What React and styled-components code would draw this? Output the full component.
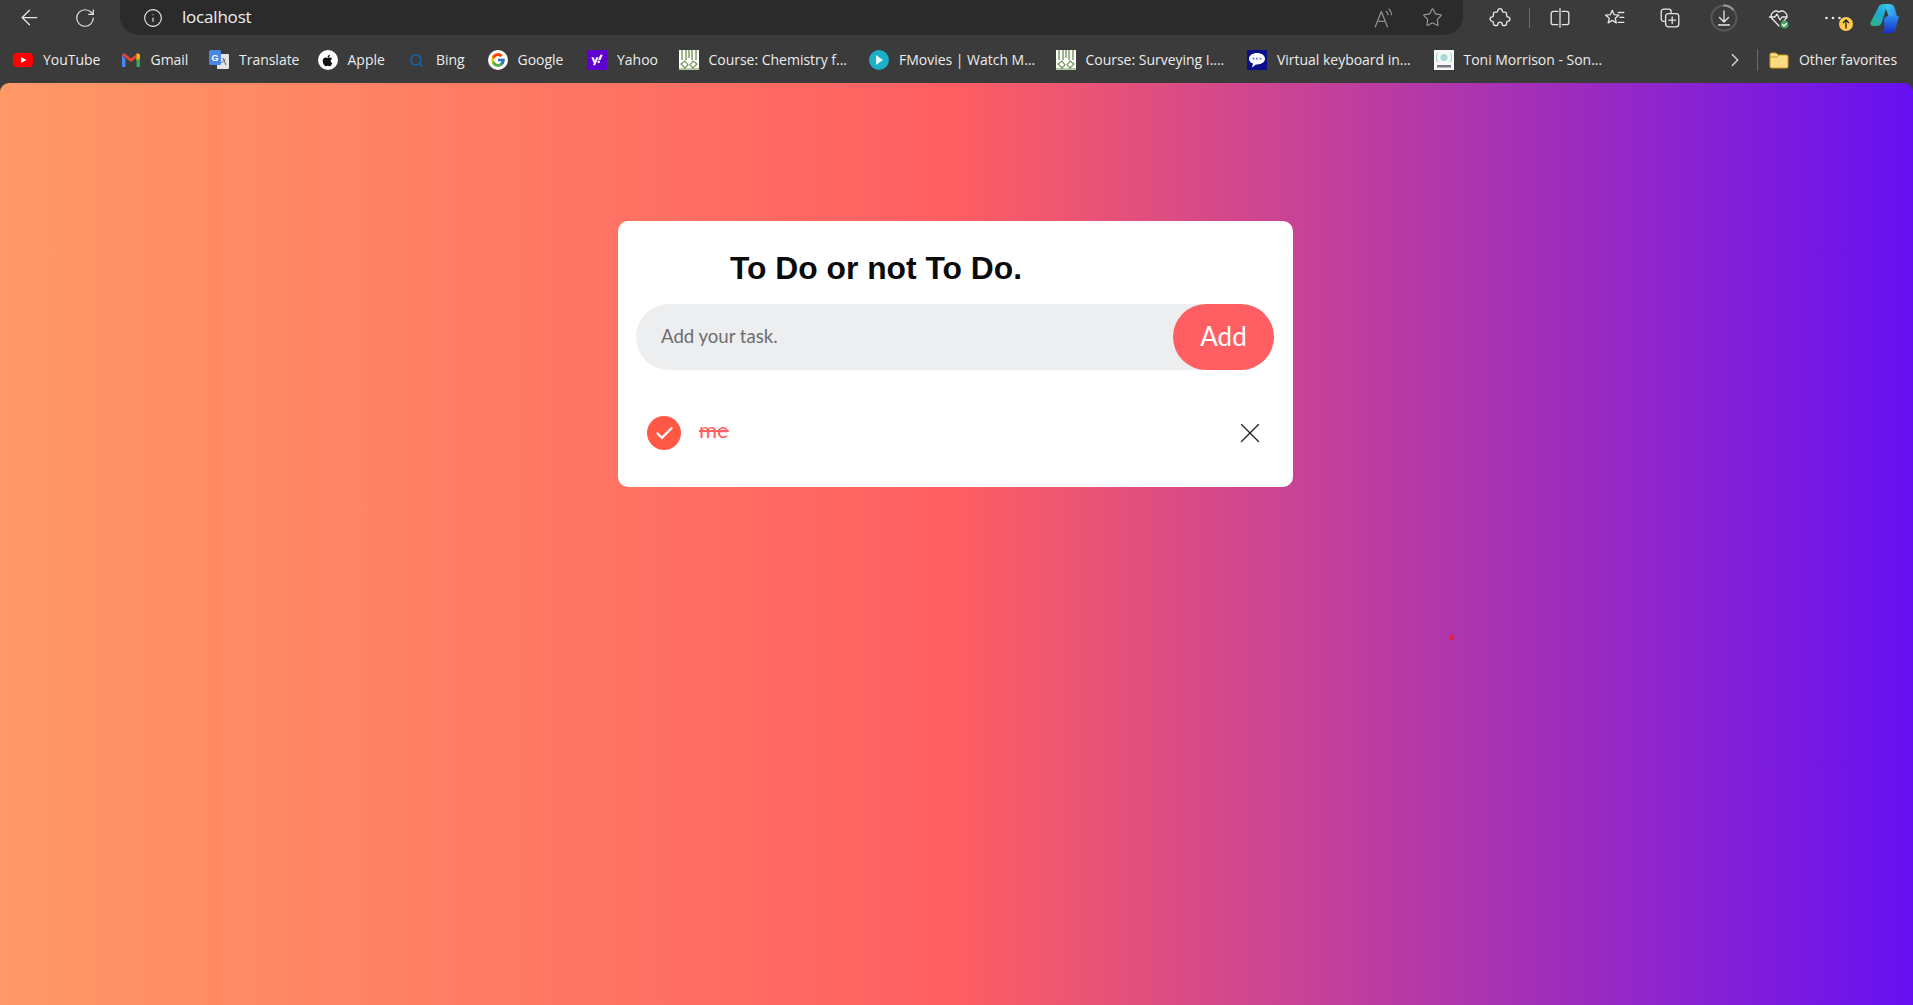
import React from "react";
import styled, { createGlobalStyle } from "styled-components";
import { ArrowLeft, RotateCw, Info, Star, ChevronRight, X, Check, Search } from "lucide-react";
import { FaApple, FaYahoo } from "react-icons/fa";
import { FcGoogle } from "react-icons/fc";

const Global = createGlobalStyle`
  html, body { margin: 0; padding: 0; height: 100%; overflow: hidden; background: #3b3b3b; }
  * { box-sizing: border-box; }
`;
const Page = styled.div`display:flex;flex-direction:column;width:1913px;height:1005px;background:#3b3b3b;font-family:"Open Sans","Liberation Sans",sans-serif;`;
const Toolbar = styled.div`display:flex;align-items:center;height:35px;padding-left:2px;color:#e6e6e6;flex:none;`;
const ToolCell = styled.div`position:relative;display:flex;align-items:center;justify-content:center;flex:none;width:${p=>p.$w||55}px;height:35px;margin-right:${p=>p.$mr||0}px;color:${p=>p.$c||"inherit"};`;
const Address = styled.div`display:flex;align-items:center;flex:none;margin-left:8px;width:1343px;height:35px;background:#2b2b2b;border-radius:0 0 20px 20px/0 0 18px 18px;padding-left:23px;color:#f0f0f0;`;
const Url = styled.span`margin-left:19px;font:17px/35px "Open Sans",sans-serif;letter-spacing:-.2px;flex:1;position:relative;top:-1px;`;
const ToolGroup = styled.div`display:flex;align-items:center;margin-left:9px;`;
const Divider = styled.div`width:1px;height:${p=>p.$h||20}px;background:#6a6a6a;flex:none;margin:0 ${p=>p.$m||2}px;`;
const Bookmarks = styled.div`display:flex;align-items:center;height:48px;padding:2px 0 0 13px;flex:none;`;
const Mark = styled.div`display:flex;align-items:center;gap:10px;flex:none;margin-right:${p=>p.$mr||20.5}px;`;
const Label = styled.span`display:inline-block;white-space:nowrap;width:${p=>p.$w}px;font-size:14px;color:#ececec;letter-spacing:-.02px;line-height:20px;`;
const Fav = styled.span`display:inline-flex;align-items:center;justify-content:center;width:20px;height:20px;flex:none;`;
const OverflowBtn = styled.div`display:flex;align-items:center;justify-content:center;margin-left:${p=>p.$ml}px;width:24px;color:#e0e0e0;`;
const Stage = styled.main`position:relative;flex:1;border-radius:9px 9px 0 0;background:linear-gradient(to right,#ff9966,#ff5e62 50%,#6610f2);padding-top:138px;`;
const Card = styled.section`width:675px;height:266px;margin-left:618px;background:#fff;border-radius:10px;padding:29px 19px 0 18px;`;
const Title = styled.h2`margin:0 0 17px 94px;font:bold 31.8px/37px "Liberation Sans",Arial,sans-serif;color:#0b0b0b;`;
const InputRow = styled.div`display:flex;align-items:center;height:66px;background:#edeef0;border-radius:33px;`;
const Field = styled.input`flex:1;border:0;outline:0;background:transparent;padding:0 0 2px 25px;font:18.6px "Lato",sans-serif;color:#666;&::placeholder{color:#6d6d6d;opacity:1;}`;
const AddBtn = styled.button`width:101px;height:66px;border:0;border-radius:33px;background:#ff5e62;color:#fff;font:26px "Lato",sans-serif;padding:0 0 3px;`;
const TaskRow = styled.div`display:flex;align-items:center;margin-top:46px;padding-left:11px;height:34px;`;
const Tick = styled.span`display:flex;align-items:center;justify-content:center;width:34px;height:34px;border-radius:50%;background:#ff5945;color:#fff;flex:none;`;
const TaskText = styled.span`margin-left:18px;flex:1;font:22px/1 "Lato",sans-serif;color:#ff5e62;text-decoration:line-through;position:relative;top:-3px;`;
const Remove = styled.span`display:flex;color:#222;margin-right:7px;`;
const Dot = styled.i`position:absolute;left:1449px;top:552px;width:5px;height:5px;border-radius:50%;background:#e9203c;`;

const Ic = ({children,s=20,...r})=><svg width={s} height={s} viewBox="0 0 20 20" fill="none" stroke="currentColor" strokeWidth="1.2" strokeLinecap="round" strokeLinejoin="round" {...r}>{children}</svg>;
const lu = {size:22,strokeWidth:1.3};

const YouTube=()=><svg width="20" height="20" viewBox="0 0 20 20"><rect y="3" width="20" height="14" rx="4" fill="#f00"/><path d="M8 7l5.5 3L8 13z" fill="#fff"/></svg>;
const Gmail=()=><svg width="20" height="20" viewBox="0 0 20 20"><path d="M1 5v12h3.5V9z" fill="#4285f4"/><path d="M19 5v12h-3.5V9z" fill="#34a853"/><path d="M1 5l9 7 9-7-2-2-7 5.5L3 3z" fill="#ea4335"/><path d="M16 3l3 2v3l-3.5 2.5V5z" fill="#fbbc04"/></svg>;
const Translate=()=><svg width="20" height="20" viewBox="0 0 20 20"><rect x="8" y="4" width="12" height="15" rx="1" fill="#e4e4e4"/><path d="M14 8l3 7M16.500 9l-4 4" stroke="#666" fill="none"/><rect y="0" width="12" height="15" rx="1.5" fill="#4a86e8"/><text x="6" y="11" textAnchor="middle" fontSize="9" fontWeight="700" fill="#fff" fontFamily="Liberation Sans">G</text></svg>;
const Circle=styled.span`display:flex;align-items:center;justify-content:center;width:20px;height:20px;border-radius:50%;background:${p=>p.$bg};`;
const Square=styled.span`display:flex;align-items:center;justify-content:center;width:20px;height:20px;background:${p=>p.$bg};`;
const Apple=()=><Circle $bg="#fff"><FaApple size={13} color="#111"/></Circle>;
const Yahoo=()=><Square $bg="#6001d2"><FaYahoo size={12} color="#fff"/></Square>;
const Course=()=><svg width="20" height="20" viewBox="0 0 20 20"><rect width="20" height="20" fill="#fff"/><path d="M3 0v10M7 0v10M10 0v8M13 0v10M17 0v10" stroke="#86a36b" strokeWidth="1.6"/><path d="M0 19h20M2 14l4-3 3 4-3 3zM18 14l-4-3-3 4 3 3z" stroke="#6f9355" fill="none" strokeWidth="1.2"/></svg>;
const Play=()=><Circle $bg="#1ab0c8"><svg width="10" height="10" viewBox="0 0 10 10"><path d="M2 0l7 5-7 5z" fill="#e8f8fa"/></svg></Circle>;
const Chat=()=><svg width="20" height="20" viewBox="0 0 20 20"><rect width="20" height="20" fill="#0b0f8a"/><path d="M10 3c4.500 0 8 2.400 8 5.700s-3.500 5.700-8 5.700l-1 0-4 3 1-3.800C3.500 12.700 2 11 2 8.700 2 5.400 5.500 3 10 3z" fill="#fff"/><circle cx="6.500" cy="8.700" r="1.100" fill="#7a80d8"/><circle cx="10" cy="8.700" r="1.100" fill="#7a80d8"/><circle cx="13.500" cy="8.700" r="1.100" fill="#7a80d8"/></svg>;
const Prime=()=><svg width="20" height="20" viewBox="0 0 20 20"><rect width="20" height="20" fill="#f4f7f6"/><circle cx="10" cy="7.500" r="3.600" fill="#a8dcd6"/><path d="M4 3a7 7 0 0 0 0 9M16 3a7 7 0 0 1 0 9" stroke="#8fd0c8" fill="none"/><rect x="3" y="15" width="14" height="2.500" fill="#778"/></svg>;
const Folder=()=><svg width="20" height="20" viewBox="0 0 20 20"><path d="M1 4.500A1.500 1.500 0 0 1 2.500 3H7l2 2h8.500A1.500 1.500 0 0 1 19 6.500v10a1.500 1.500 0 0 1-1.500 1.500h-15A1.500 1.500 0 0 1 1 16.500z" fill="#fbdc85" stroke="#c99a1f"/><path d="M1 7h7l2-2" stroke="#c99a1f" fill="none"/></svg>;

const Read=()=><Ic s={22} stroke="#8d8d8d"><path d="M3 18L8.500 4 14 18M5 13h7"/><path d="M13 4c1 .8 1.500 2 1.500 3M15.500 2c1.500 1.300 2.300 3 2.300 5"/></Ic>;
const Puzzle=()=><Ic s={22}><path d="M8 3.500a2 2 0 0 1 4 0c0 .8.500 1.200 1.200 1.200h1.300c.8 0 1.500.700 1.500 1.500v1.800c0 .7.400 1 1 1a2 2 0 0 1 0 4c-.6 0-1 .4-1 1v1.300c0 .8-.7 1.500-1.500 1.500H13c-.7 0-1-.4-1-1a2 2 0 0 0-4 0c0 .6-.3 1-1 1H5.500c-.8 0-1.500-.7-1.500-1.500V14c0-.6-.4-1-1-1a2 2 0 0 1 0-4c.6 0 1-.4 1-1V6.200c0-.8.700-1.500 1.500-1.500h1.300C7.500 4.700 8 4.300 8 3.500z"/></Ic>;
const Split=()=><Ic s={22}><path d="M8 4H4a2 2 0 0 0-2 2v8a2 2 0 0 0 2 2h4M12 4h4a2 2 0 0 1 2 2v8a2 2 0 0 1-2 2h-4"/><path d="M10 1.500v17"/></Ic>;
const Favs=()=><Ic s={22}><path d="M7.500 3l1.700 4 4.300.4-3.300 2.800 1 4.300-3.700-2.300L3.800 14.500l1-4.300L1.500 7.400l4.300-.4z"/><path d="M13 5h5M14.500 9.500H18M13 14h5"/></Ic>;
const Coll=()=><Ic s={22}><path d="M5 13H4a2 2 0 0 1-2-2V4.500A2.500 2.500 0 0 1 4.500 2H9a2 2 0 0 1 2 2v1"/><rect x="6" y="6" width="12" height="12" rx="2.500"/><path d="M12 9v6M9 12h6"/></Ic>;
const Dl=()=><svg width="28" height="28" viewBox="0 0 28 28" fill="none" stroke="#e6e6e6" strokeWidth="1.3" strokeLinecap="round" strokeLinejoin="round"><circle cx="14" cy="14" r="12.500" stroke="#5a5a5a" strokeWidth="2"/><path d="M14 1.500a12.500 12.500 0 0 1 9 4" stroke="#9a9a9a" strokeWidth="2"/><path d="M14 7v11M9.500 13.500L14 18l4.500-4.500M8.500 21h11"/></svg>;
const Health=()=><svg width="24" height="24" viewBox="0 0 24 24" fill="none" stroke="#e6e6e6" strokeWidth="1.3" strokeLinecap="round" strokeLinejoin="round"><path d="M12 20l-7.500-8A5 5 0 0 1 12 6a5 5 0 0 1 7.500 6L15 17"/><path d="M2.500 11H8l2-3 3 6 2-3h5"/><circle cx="17.500" cy="18.500" r="4" fill="#3da35a" stroke="none"/><path d="M15.500 18.500l1.500 1.500 2.500-2.500" stroke="#fff"/></svg>;
const Dots=()=><svg width="18" height="6" viewBox="0 0 18 6"><circle cx="2.500" cy="3" r="1.300" fill="#e6e6e6"/><circle cx="9" cy="3" r="1.300" fill="#e6e6e6"/><circle cx="15.500" cy="3" r="1.300" fill="#e6e6e6"/></svg>;
const Badge=styled.span`position:absolute;left:33px;top:17px;width:14px;height:14px;border-radius:50%;background:#fdcb4e;color:#222;display:flex;align-items:center;justify-content:center;`;
const Copilot=()=><svg width="30" height="30" viewBox="0 0 30 30"><defs><linearGradient id="cA" x1="0" y1="0" x2="1" y2="1"><stop offset="0" stopColor="#3ad0ee"/><stop offset="1" stopColor="#2f7be8"/></linearGradient><linearGradient id="cB" x1="0" y1="1" x2="1" y2="0"><stop offset="0" stopColor="#2bb673"/><stop offset=".55" stopColor="#1fa9d6"/><stop offset="1" stopColor="#3ac9ec"/></linearGradient><linearGradient id="cC" x1="0" y1="0" x2="0" y2="1"><stop offset="0" stopColor="#2a8ef0"/><stop offset="1" stopColor="#1b2fc8"/></linearGradient></defs><path d="M8 5c1-3 3-4 5.500-4H20c-2.500 1-3.500 3-4.300 5.500L12 19c-.8 2.500-2.500 4-5 4H3c-2 0-3-1.500-2.500-3.500z" fill="url(#cB)"/><path d="M19 1c3 0 5 1.200 5.700 4l3.300 12h-5c-2.500 0-3.500-1-4.200-3.500L16 6c-.5-2 1-5 3-5z" fill="url(#cA)"/><path d="M14 17c.8-2.500 2.500-4 5-4h10l-3.200 12.500c-.7 2.500-2.500 4.500-5 4.500H10c3 0 4-2 4.500-4z" fill="url(#cC)"/></svg>;

const marks=[
  {i:<YouTube/>,t:"YouTube",w:57},
  {i:<Gmail/>,t:"Gmail",w:38},
  {i:<Translate/>,t:"Translate",w:58},
  {i:<Apple/>,t:"Apple",w:38},
  {i:<Search size={15} color="#0f6cbd" strokeWidth={2.2}/>,t:"Bing",w:31},
  {i:<Circle $bg="#fff"><FcGoogle size={16}/></Circle>,t:"Google",w:49},
  {i:<Yahoo/>,t:"Yahoo",w:41},
  {i:<Course/>,t:"Course: Chemistry f...",w:140},
  {i:<Play/>,t:"FMovies | Watch M...",w:136},
  {i:<Course/>,t:"Course: Surveying I....",w:141},
  {i:<Chat/>,t:"Virtual keyboard in...",w:136},
  {i:<Prime/>,t:"Toni Morrison - Son...",w:141},
];

export default function App(){
  return <Page>
    <Global/>
    <Toolbar>
      <ToolCell><ArrowLeft {...lu} size={25} strokeWidth={1.2}/></ToolCell>
      <ToolCell><RotateCw {...lu}/></ToolCell>
      <Address>
        <Info size={20} strokeWidth={1.3}/>
        <Url>localhost</Url>
        <ToolCell $w={49} $mr={1}><Read/></ToolCell>
        <ToolCell $w={49} $mr={6} $c="#a0a0a0"><Star size={21} strokeWidth={1.2}/></ToolCell>
      </Address>
      <ToolGroup>
        <ToolCell><Puzzle/></ToolCell>
        <Divider/>
        <ToolCell><Split/></ToolCell>
        <ToolCell><Favs/></ToolCell>
        <ToolCell><Coll/></ToolCell>
        <ToolCell $w={54}><Dl/></ToolCell>
        <ToolCell><Health/></ToolCell>
        <ToolCell $w={54}><Dots/><Badge><svg width="8" height="10" viewBox="0 0 8 10" fill="none" stroke="#222" strokeWidth="1.3"><path d="M4 9.500V1M1 4l3-3 3 3"/></svg></Badge></ToolCell>
        <ToolCell $w={50}><Copilot/></ToolCell>
      </ToolGroup>
    </Toolbar>
    <Bookmarks>
      {marks.map(m=><Mark key={m.t} $mr={m.mr}><Fav>{m.i}</Fav><Label $w={m.w}>{m.t}</Label></Mark>)}
      <OverflowBtn $ml={99}><ChevronRight size={22} strokeWidth={1.3}/></OverflowBtn>
      <Divider $h={22} $m={11}/>
      <Mark><Fav><Folder/></Fav><Label $w={98}>Other favorites</Label></Mark>
    </Bookmarks>
    <Stage>
      <Card>
        <Title>To Do or not To Do.</Title>
        <InputRow><Field placeholder="Add your task."/><AddBtn>Add</AddBtn></InputRow>
        <TaskRow>
          <Tick><Check size={21} strokeWidth={2.6}/></Tick>
          <TaskText>me</TaskText>
          <Remove><X size={34} strokeWidth={.9}/></Remove>
        </TaskRow>
      </Card>
      <Dot/>
    </Stage>
  </Page>;
}
